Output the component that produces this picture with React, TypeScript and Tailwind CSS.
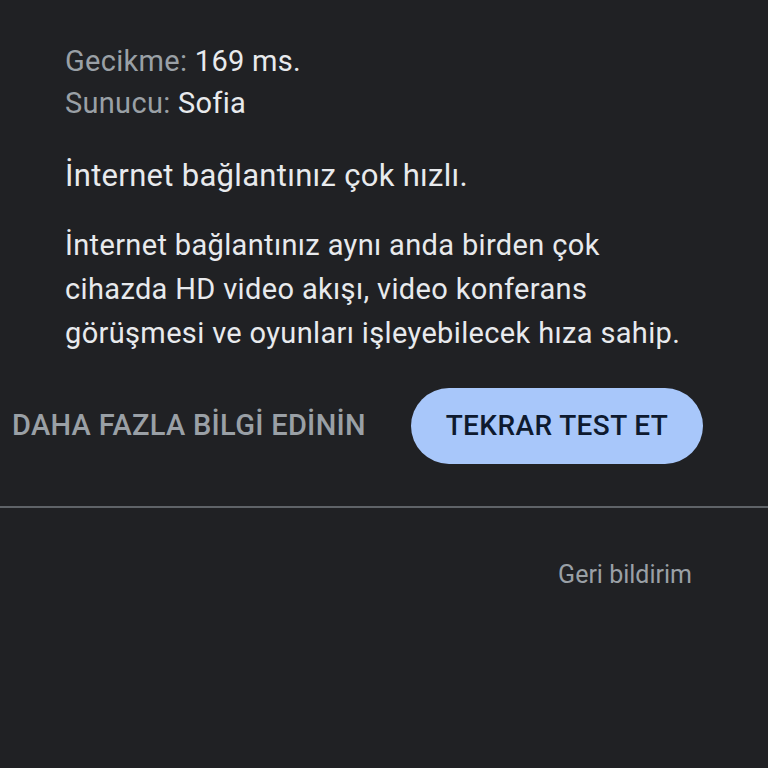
export default function App() {
  return (
    <div className="h-[768px] w-[768px] overflow-hidden bg-[#202124] font-['Roboto',sans-serif]">
      <div className="pl-[65px] pt-[40px]">
        <div className="text-[29px] leading-[42px] tracking-[0.3px] text-[#9aa0a6]">
          Gecikme: <span className="text-[#e8eaed]">169 ms.</span>
        </div>
        <div className="text-[29px] leading-[42px] tracking-[0.3px] text-[#9aa0a6]">
          Sunucu: <span className="text-[#e8eaed]">Sofia</span>
        </div>
        <p className="mt-[30px] text-[31px] leading-[44px] tracking-[0.3px] text-[#e8eaed]">
          İnternet bağlantınız çok hızlı.
        </p>
        <p className="mt-[25px] whitespace-nowrap text-[29px] leading-[44px] tracking-[0.35px] text-[#e8eaed]">
          İnternet bağlantınız aynı anda birden çok
          <br />
          cihazda HD video akışı, video konferans
          <br />
          görüşmesi ve oyunları işleyebilecek hıza sahip.
        </p>
      </div>
      <div className="mt-[33px] flex items-center">
        <button className="ml-[12px] w-[356px] whitespace-nowrap text-left text-[29px] font-medium tracking-[0.3px] text-[#9aa0a6]">
          DAHA FAZLA BİLGİ EDİNİN
        </button>
        <button className="ml-[43px] flex h-[76px] w-[292px] items-center justify-center rounded-full bg-[#a8c7fa] text-[28px] font-medium tracking-[0.4px] text-[#0e1a2f]">
          TEKRAR TEST ET
        </button>
      </div>
      <div className="mt-[42px] h-[2px] w-full bg-[#5f6368]" />
      <div className="mt-[48px] flex justify-end pr-[76px]">
        <span className="text-[25px] text-[#9aa0a6]">Geri bildirim</span>
      </div>
    </div>
  );
}
